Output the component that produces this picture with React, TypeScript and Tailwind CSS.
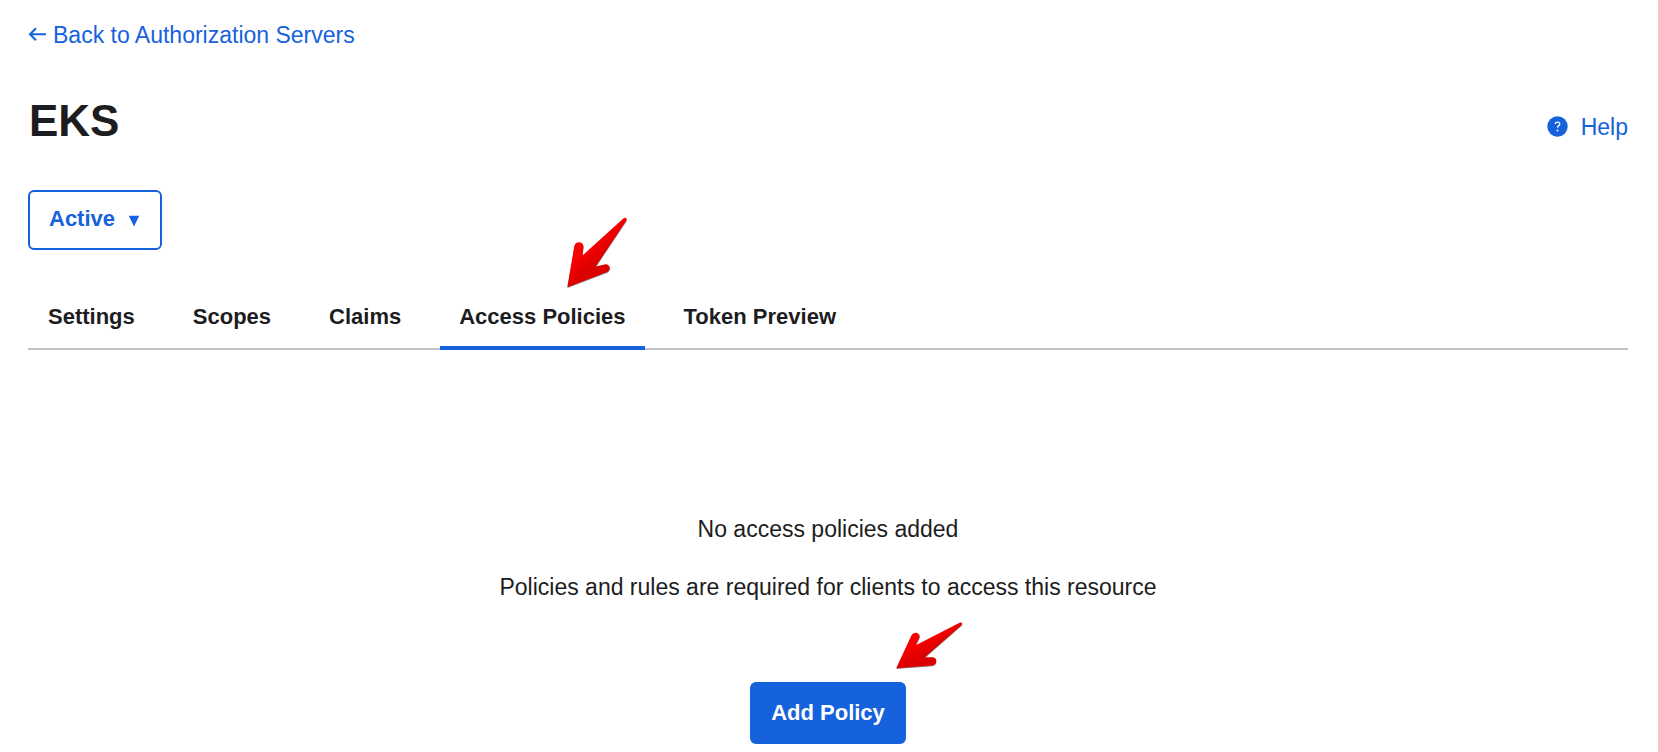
type ArrowProps = { className: string; width: number; height: number; path: string; id: string };

function RedArrow({ className, width, height, path, id }: ArrowProps) {
  return (
    <svg
      className={className}
      width={width}
      height={height}
      viewBox={`0 0 ${width} ${height}`}
      aria-hidden="true"
    >
      <defs>
        <linearGradient id={id} x1="0.4" y1="0.4" x2="0.55" y2="0.6">
          <stop offset="0" stopColor="#f60000" />
          <stop offset="1" stopColor="#dc0000" />
        </linearGradient>
      </defs>
      <path d={path} transform="translate(0.2 0.8)" fill="#444" opacity="0.65" />
      <path d={path} fill={`url(#${id})`} />
    </svg>
  );
}

const tabs = ["Settings", "Scopes", "Claims", "Access Policies", "Token Preview"];
const activeTab = "Access Policies";

export default function App() {
  return (
    <main className="bg-white pt-[19px] pr-[30px] pb-2 pl-7 font-['Liberation_Sans',Arial,sans-serif] text-[23px] leading-8 text-[#1d1d21]">
      <a href="#servers" className="inline-flex items-center gap-[7px] text-[#1662dd]">
        <svg width="18" height="16" viewBox="0 0 18 16" fill="none" stroke="currentColor" strokeWidth="2.1" aria-hidden="true">
          <path d="M18 7.2H2.2M8 1.2 2 7.2 8 13.2" />
        </svg>
        Back to Authorization Servers
      </a>

      <header className="mt-10 flex items-center justify-between">
        <h1 className="pl-px text-[44px] leading-[60px] font-bold">EKS</h1>
        <a href="#help" className="mt-3 flex items-center gap-3 text-[#1662dd]">
          <svg width="22" height="22" viewBox="0 0 22 22" aria-hidden="true">
            <circle cx="10.5" cy="10.5" r="10.2" fill="currentColor" />
            <path d="M8.2 8.1C8.3 6.8 9.2 6.1 10.5 6.1s2.3.7 2.3 1.9c0 1.7-2.3 1.6-2.3 3.8" fill="none" stroke="#fff" strokeWidth="1.3" />
            <circle cx="10.5" cy="14.5" r="0.9" fill="#fff" />
          </svg>
          Help
        </a>
      </header>

      <button
        type="button"
        className="mt-[39px] flex h-[60px] items-center gap-[13px] rounded-md border-2 border-[#1662dd] bg-white pr-5 pb-0.5 pl-[19px] text-[22px] font-bold text-[#1662dd]"
      >
        Active
        <svg className="mt-1" width="12" height="12" viewBox="0 0 12 12" aria-hidden="true">
          <path d="M0.8 0.8H11.2L6 11.4Z" fill="currentColor" />
        </svg>
      </button>

      <nav className="mt-[51px] flex gap-5 border-b-2 border-[#c1c1c8] pl-px text-[22px]">
        {tabs.map((tab) => (
          <a
            key={tab}
            href={`#${tab.toLowerCase().replace(" ", "-")}`}
            aria-current={tab === activeTab ? "page" : undefined}
            className={
              tab === activeTab
                ? "relative -mb-0.5 border-b-4 border-[#1662dd] px-[19px] pb-[13px] font-bold"
                : "px-[19px] pb-[15px] font-bold"
            }
          >
            {tab}
            {tab === activeTab && (
              <RedArrow
                className="absolute bottom-[56px] left-[120px]"
                id="tab-arrow"
                width={70}
                height={80}
                path="M7.3 77.3 14.3 36.2C15.2 30.5 23.8 31 23.4 36.9L22.5 45.4 63.3 8.6C65.5 6.8 67.4 8.6 66.3 10.6L35.6 56.6 44.6 54.4C50.2 53.5 51.6 60.2 46.6 62.3Z"
              />
            )}
          </a>
        ))}
      </nav>

      <section className="mt-[163px] flex flex-col items-center text-center">
        <p>No access policies added</p>
        <p className="mt-[26px]">Policies and rules are required for clients to access this resource</p>
        <div className="relative mt-[79px]">
          <button type="button" className="h-[62px] rounded-md bg-[#1662dd] px-[21px] text-[22px] font-bold text-white">
            Add Policy
          </button>
          <RedArrow
            className="absolute bottom-[69px] left-[140px]"
            id="button-arrow"
            width={76}
            height={60}
            path="M6.2 53.2 21.4 20.6C24.2 15 31.2 18.4 29.2 22.9L25.7 30.3 69.6 7.8C71.8 7 73 8.8 71.4 10.2L34.8 42.2 43 42.3C47.4 42.6 47.4 49.9 42.4 50.4Z"
          />
        </div>
      </section>
    </main>
  );
}
